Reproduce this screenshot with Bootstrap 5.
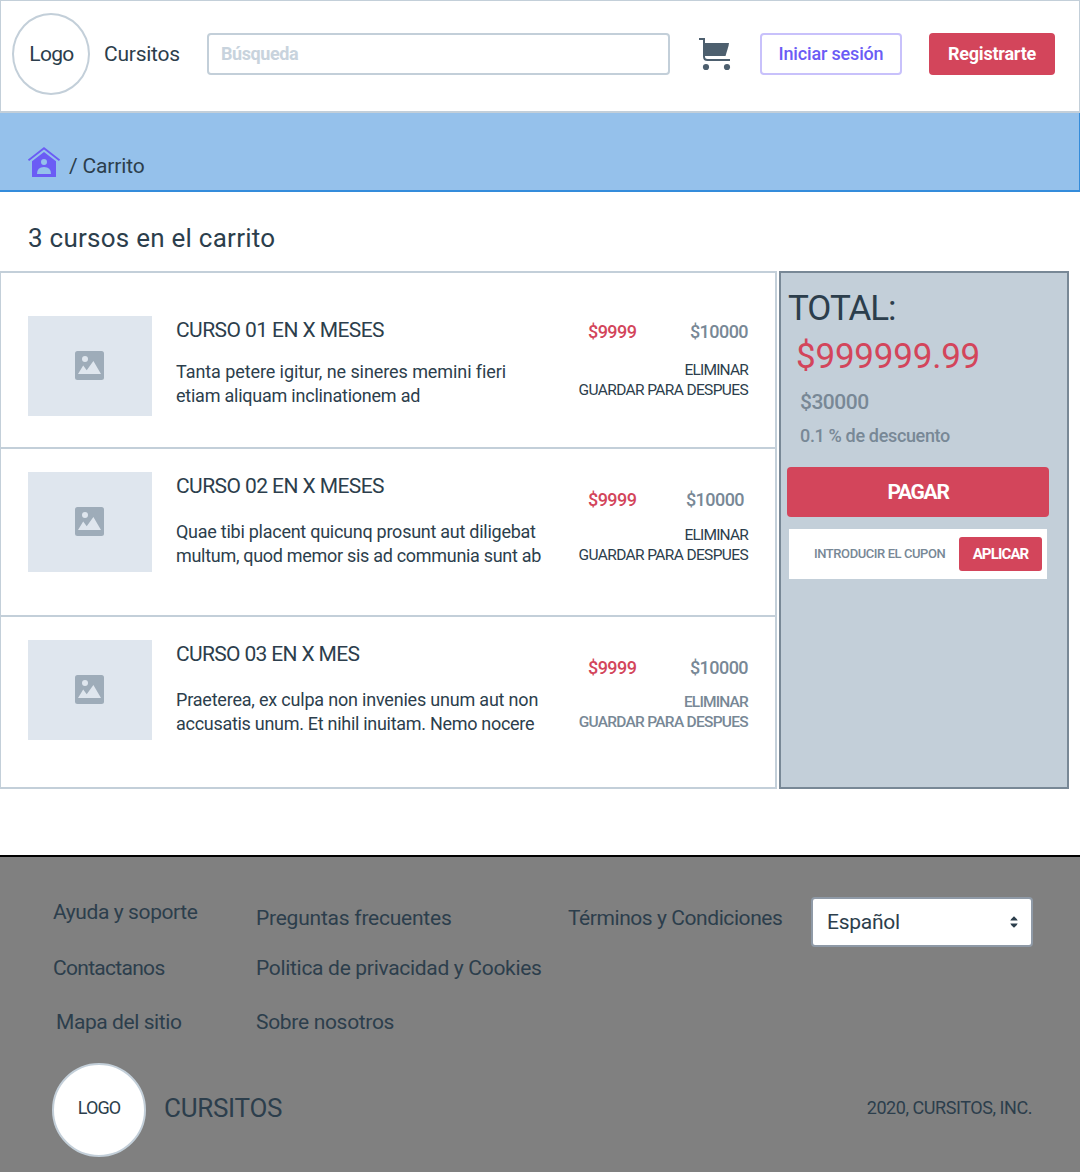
<!doctype html>
<html lang="es">
<head>
<meta charset="utf-8">
<meta name="viewport" content="width=device-width, initial-scale=1">
<title>Cursitos - Carrito</title>
<link rel="stylesheet" href="https://cdn.jsdelivr.net/npm/bootstrap@5.3.0/dist/css/bootstrap.min.css">
<style>
:root{--ink:#2c3e4c;--line:#c3cfd9;--slate:#788896;--rojo:#d3455b;--violeta:#6b5cf5}
body{font-family:Roboto,"Liberation Sans",sans-serif;color:var(--ink);background:#fff;font-size:21px;line-height:24px;white-space:nowrap}
a{color:inherit;text-decoration:none}
svg{display:block;flex:none}
.t13{font-size:13px}.t155{font-size:15.5px}.t18{font-size:18px}.t26{font-size:26px}.t35{font-size:35px}
.w5{font-weight:500}
.red{color:var(--rojo)}.slate{color:var(--slate)}
.btn{--bs-btn-border-radius:4px;--bs-btn-line-height:24px;padding:0;display:flex;align-items:center;justify-content:center;flex:none}
.btn-rojo,.btn-rojo:hover{background:var(--rojo);color:#fff;border:0}

.topbar{height:113px;border:1px solid var(--line);border-bottom-width:2px;padding:12px 23px 0 11px}
.topbar-row{height:82px}
.logo-top{width:78px;height:82px;border:2px solid var(--line);border-radius:50%;letter-spacing:-.69px;padding-left:1px;flex:none}
.brand{margin-left:14px;width:103px;letter-spacing:-.24px;flex:none}
.search{width:463px;height:42px;border:2px solid var(--line);border-radius:4px;padding:0 12px 2px;font-size:18px;font-weight:700;letter-spacing:-.41px;flex:none}
.search::placeholder{color:#c8d3dd;opacity:1}
.cart{margin-left:29px}
.btn-login,.btn-login:hover{width:142px;height:42px;margin-left:29px;border:2px solid #c8c1fb;color:var(--violeta);font-size:18px;font-weight:500;letter-spacing:-.16px;background:#fff}
.btn-reg{width:126px;height:42px;margin-left:27px;font-size:18px;font-weight:700;letter-spacing:-.2px}

.crumbs{height:79px;background:#95c1eb;border-bottom:2px solid #348cdb;border-right:1px solid #348cdb;padding:34px 0 0 28px}
.crumbs-text{padding:7px 0 0 9px;letter-spacing:-.16px}
.count{margin:0;padding:34px 0 21px 28px;font-weight:400;line-height:24px;letter-spacing:.25px}

.cart-area{height:518px;gap:2px}
.courses{width:777px;border:2px solid var(--line);border-left-width:1px}
.course{padding:23px 27px 0 27px;height:170px}
.course+.course{border-top:2px solid var(--line)}
.course.c1{padding-top:43px;height:174px}
.course.c2{height:168px}
.thumb{width:124px;height:100px;background:#dfe6ee;padding:0 1px 1px 0;flex:none}
.course-info{padding:2px 0 0 24px}
.course-title{font-size:21px;font-weight:400;line-height:24px;margin:0 0 22px;letter-spacing:-.57px}
.c3 .course-title{letter-spacing:-.65px}
.c1 .course-title{margin-bottom:18px}
.la{letter-spacing:-.08px}.lb{letter-spacing:-.23px}.lc{letter-spacing:-.26px}.ld{letter-spacing:-.3px}.le{letter-spacing:-.2px}.lf{letter-spacing:-.29px}
.course-side{width:171px;padding-top:16px}
.c1 .course-side{padding-top:4px}
.prices{padding-left:11px;margin-bottom:13px;letter-spacing:-.55px}
.c2 .prices{padding-right:4px}
.c3 .prices{margin-bottom:12px}
.c1 .prices{margin-bottom:16px}
.acts{line-height:20px;letter-spacing:-.63px}
.acts.w5{letter-spacing:-.72px}
.acts a:first-child{letter-spacing:-.82px}

.summary{width:290px;background:#c3cfd9;border:2px solid var(--slate);padding:15px 18px 0 6px}
.total{line-height:42px;margin:0;font-weight:400;letter-spacing:-1.05px;padding-left:1px}
.total-amt{line-height:42px;padding:6px 0 0 9px;letter-spacing:-.22px}
.old-amt{padding:12px 0 0 13px;letter-spacing:-.5px}
.disc{padding:10px 0 0 13px;letter-spacing:-.34px}
.btn-pay{width:262px;height:50px;margin-top:19px;font-size:21px;font-weight:700;letter-spacing:-1.3px}
.coupon{width:258px;height:50px;background:#fff;margin:12px 0 0 2px;padding:0 5px 0 25px}
.coupon-label{letter-spacing:-.43px}
.btn-apply{width:83px;height:34px;font-size:15px;font-weight:700;letter-spacing:-.86px;--bs-btn-border-radius:3px}

.foot{margin-top:66px;height:317px;background:#808080;border-top:2px solid #000;padding:40px 47px 0 52px}
.foot-top{height:166px}
.fc1{width:204px;padding:3px 0 0 1px;letter-spacing:-.4px}.fc2{width:312px;letter-spacing:-.31px}.fc3{width:243px;letter-spacing:-.43px}
.fc1 a+a{margin-top:32px;letter-spacing:-.7px}.fc1 a:last-child{margin:30px 0 0 3px;letter-spacing:-.42px}
.fc2,.fc3{padding-top:9px}
.fc2 a:first-child{letter-spacing:-.23px}
.fc2 a+a{margin-top:26px}.fc2 a:last-child{margin-top:30px}
.lang{width:222px;height:50px;background:#fff;border:2px solid #8f9aa7;border-radius:4px;padding:0 13px 0 14px;letter-spacing:-.25px}
.foot-bottom{height:94px}
.logo-foot{width:94px;height:94px;border:2px solid var(--line);border-radius:50%;background:#fff;letter-spacing:-.92px;padding-bottom:4px}
.foot-name{margin-left:18px;padding-bottom:4px;letter-spacing:-.28px}
.copy{padding:0 1px 4px 0;letter-spacing:-.44px}
</style>
<script src="https://cdn.jsdelivr.net/npm/bootstrap@5.3.0/dist/js/bootstrap.bundle.min.js"></script>
</head>
<body>
<svg width="0" height="0" class="position-absolute" aria-hidden="true">
  <symbol id="pic" viewBox="0 0 29 29"><rect width="29" height="29" rx="2.5" fill="#9eacb9"/><circle cx="10" cy="8" r="3" fill="#dfe6ee"/><path d="M3 23L8.2 14.5L11.7 19.3L18.4 10L26 23Z" fill="#dfe6ee"/></symbol>
</svg>

<header class="topbar">
  <div class="topbar-row d-flex align-items-center">
    <div class="logo-top d-flex align-items-center justify-content-center">Logo</div>
    <a class="brand" href="#">Cursitos</a>
    <input class="search" type="text" placeholder="Búsqueda">
    <svg class="cart" width="32" height="33" viewBox="0 0 32 33"><path d="M0 1H5V18.500Q5 22 8.500 22H31" fill="none" stroke="#4d5f6e" stroke-width="2"/><path d="M5 5H30L29.500 8L26.500 18H5Z" fill="#4d5f6e"/><circle cx="7" cy="29" r="3.100" fill="#4d5f6e"/><circle cx="28" cy="29" r="3.100" fill="#4d5f6e"/></svg>
    <a class="btn btn-login" href="#">Iniciar sesión</a>
    <a class="btn btn-rojo btn-reg" href="#">Registrarte</a>
  </div>
</header>

<nav class="crumbs d-flex">
  <svg width="32" height="31" viewBox="0 0 32 31"><path d="M.5 13.300L16 1.300L31.500 13.300" fill="none" stroke="#6b5cf5" stroke-width="1.900"/><path fill-rule="evenodd" fill="#6b5cf5" d="M16 5L28 14.300V29.500Q28 30 27.500 30H4.500Q4 30 4 29.500V14.300ZM16 12A3 3 0 1 0 16 18A3 3 0 1 0 16 12ZM9 27H23Q23 20 16 20Q9 20 9 27Z"/></svg>
  <div class="crumbs-text">/ Carrito</div>
</nav>

<main>
  <h1 class="count t26">3 cursos en el carrito</h1>
  <div class="cart-area d-flex">
    <section class="courses">
      <article class="course c1 d-flex">
        <div class="thumb d-flex align-items-center justify-content-center"><svg width="29" height="29"><use href="#pic"/></svg></div>
        <div class="course-info flex-grow-1">
          <h2 class="course-title">CURSO 01 EN X MESES</h2>
          <div class="t18 la">Tanta petere igitur, ne sineres memini fieri</div>
          <div class="t18 lb">etiam aliquam inclinationem ad</div>
        </div>
        <div class="course-side">
          <div class="prices d-flex justify-content-between t18 w5"><span class="red">$9999</span><span class="slate">$10000</span></div>
          <div class="acts t155 d-flex flex-column align-items-end"><a href="#">ELIMINAR</a><a href="#">GUARDAR PARA DESPUES</a></div>
        </div>
      </article>
      <article class="course c2 d-flex">
        <div class="thumb d-flex align-items-center justify-content-center"><svg width="29" height="29"><use href="#pic"/></svg></div>
        <div class="course-info flex-grow-1">
          <h2 class="course-title">CURSO 02 EN X MESES</h2>
          <div class="t18 lc">Quae tibi placent quicunq prosunt aut diligebat</div>
          <div class="t18 ld">multum, quod memor sis ad communia sunt ab</div>
        </div>
        <div class="course-side">
          <div class="prices d-flex justify-content-between t18 w5"><span class="red">$9999</span><span class="slate">$10000</span></div>
          <div class="acts t155 d-flex flex-column align-items-end"><a href="#">ELIMINAR</a><a href="#">GUARDAR PARA DESPUES</a></div>
        </div>
      </article>
      <article class="course c3 d-flex">
        <div class="thumb d-flex align-items-center justify-content-center"><svg width="29" height="29"><use href="#pic"/></svg></div>
        <div class="course-info flex-grow-1">
          <h2 class="course-title">CURSO 03 EN X MES</h2>
          <div class="t18 le">Praeterea, ex culpa non invenies unum aut non</div>
          <div class="t18 lf">accusatis unum. Et nihil inuitam. Nemo nocere</div>
        </div>
        <div class="course-side">
          <div class="prices d-flex justify-content-between t18 w5"><span class="red">$9999</span><span class="slate">$10000</span></div>
          <div class="acts t155 w5 slate d-flex flex-column align-items-end"><a href="#">ELIMINAR</a><a href="#">GUARDAR PARA DESPUES</a></div>
        </div>
      </article>
    </section>

    <aside class="summary">
      <h2 class="total t35">TOTAL:</h2>
      <div class="total-amt t35 red">$999999.99</div>
      <div class="old-amt w5 slate">$30000</div>
      <div class="disc t18 w5 slate">0.1 % de descuento</div>
      <button class="btn btn-rojo btn-pay" type="button">PAGAR</button>
      <div class="coupon d-flex align-items-center justify-content-between">
        <span class="coupon-label t13 w5 slate">INTRODUCIR EL CUPON</span>
        <button class="btn btn-rojo btn-apply" type="button">APLICAR</button>
      </div>
    </aside>
  </div>
</main>

<footer class="foot">
  <div class="foot-top d-flex">
    <div class="fc1 d-flex flex-column align-items-start">
      <a href="#">Ayuda y soporte</a>
      <a href="#">Contactanos</a>
      <a href="#">Mapa del sitio</a>
    </div>
    <div class="fc2 d-flex flex-column align-items-start">
      <a href="#">Preguntas frecuentes</a>
      <a href="#">Politica de privacidad y Cookies</a>
      <a href="#">Sobre nosotros</a>
    </div>
    <div class="fc3"><a href="#">Términos y Condiciones</a></div>
    <div class="lang d-flex align-items-center justify-content-between">
      <span>Español</span>
      <svg width="8" height="12" viewBox="0 0 8 12"><path d="M.3 4.600Q1 3 4 .3Q7 3 7.700 4.600ZM.3 7.400Q1 9 4 11.700Q7 9 7.700 7.400Z" fill="#2c3e4c"/></svg>
    </div>
  </div>
  <div class="foot-bottom d-flex align-items-center">
    <div class="logo-foot t18 d-flex align-items-center justify-content-center">LOGO</div>
    <div class="foot-name t26">CURSITOS</div>
    <div class="copy t18 ms-auto">2020, CURSITOS, INC.</div>
  </div>
</footer>
</body>
</html>
